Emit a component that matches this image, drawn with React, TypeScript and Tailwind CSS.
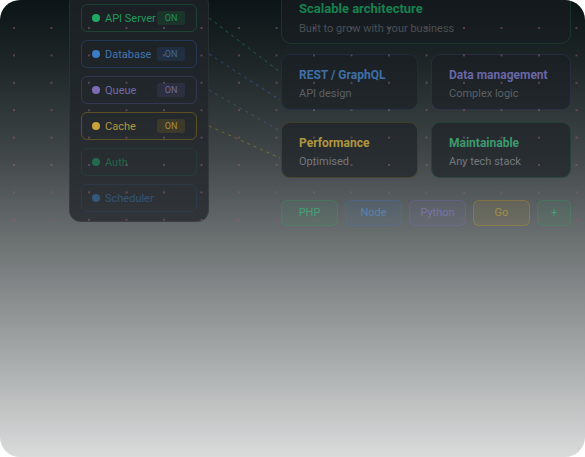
import type { ReactNode } from "react";

type Tone = "green" | "blue" | "purple" | "yellow";

const services: { name: string; tone: Tone; on: boolean }[] = [
  { name: "API Server", tone: "green", on: true },
  { name: "Database", tone: "blue", on: true },
  { name: "Queue", tone: "purple", on: true },
  { name: "Cache", tone: "yellow", on: true },
  { name: "Auth", tone: "green", on: false },
  { name: "Scheduler", tone: "blue", on: false },
];

const rowStyles: Record<Tone, { row: string; dot: string; text: string; pill: string }> = {
  green: {
    row: "border-[#22c55e]/20",
    dot: "bg-[#1fa866]",
    text: "text-[#1f9a5e]",
    pill: "bg-[#22c55e]/12 text-[#23915a]",
  },
  blue: {
    row: "border-[#3b82f6]/22",
    dot: "bg-[#3c7cc2]",
    text: "text-[#3f74ae]",
    pill: "bg-[#3b82f6]/12 text-[#42699a]",
  },
  purple: {
    row: "border-[#8b7cf6]/18",
    dot: "bg-[#7c6cb8]",
    text: "text-[#716aa8]",
    pill: "bg-[#8b7cf6]/10 text-[#6e6a9c]",
  },
  yellow: {
    row: "border-[#eab308]/28",
    dot: "bg-[#c9a23c]",
    text: "text-[#b4953c]",
    pill: "bg-[#eab308]/12 text-[#a88f3c]",
  },
};

const pills: { label: string; cls: string; w: string }[] = [
  { label: "PHP", cls: "border-[#22c55e]/18 bg-[#22c55e]/6 text-[#45a078]", w: "w-[57px]" },
  { label: "Node", cls: "border-[#3b82f6]/18 bg-[#3b82f6]/6 text-[#5882b2]", w: "w-[57px]" },
  { label: "Python", cls: "border-[#8b7cf6]/18 bg-[#8b7cf6]/6 text-[#7874aa]", w: "w-[57px]" },
  { label: "Go", cls: "border-[#eab308]/22 bg-[#eab308]/7 text-[#a58e4a]", w: "w-[57px]" },
  { label: "+", cls: "border-[#22c55e]/18 bg-[#22c55e]/6 text-[#45a078]", w: "w-[34px]" },
];

function ServiceRow({ name, tone, on }: { name: string; tone: Tone; on: boolean }) {
  const s = rowStyles[tone];
  return (
    <div
      className={`flex h-[28px] items-center rounded-[6px] border pl-[10px] pr-[11px] ${s.row} ${
        on ? "" : "opacity-50"
      }`}
    >
      <span className={`h-[8px] w-[8px] shrink-0 rounded-full ${s.dot}`} />
      <span className={`ml-[5px] whitespace-nowrap text-[11px] leading-none ${s.text}`}>{name}</span>
      {on ? (
        <span
          className={`ml-auto flex h-[14px] w-[28px] shrink-0 items-center justify-center rounded-[3px] text-[9px] leading-none ${s.pill}`}
        >
          ON
        </span>
      ) : null}
    </div>
  );
}

function FeatureCard({
  title,
  subtitle,
  titleColor,
  border,
  subColor,
}: {
  title: string;
  subtitle: string;
  titleColor: string;
  border: string;
  subColor: string;
}) {
  return (
    <div className={`flex h-[56px] flex-col rounded-[9px] border bg-[rgba(26,30,35,0.63)] pl-[17px] pt-[12px] ${border}`}>
      <span className={`text-[12px] font-bold leading-[16px] ${titleColor}`}>{title}</span>
      <span className={`mt-[3px] text-[11px] leading-[16px] ${subColor}`}>{subtitle}</span>
    </div>
  );
}

function DotGrid() {
  const dots: ReactNode[] = [];
  for (let r = 0; r < 8; r++) {
    for (let c = 0; c < 16; c++) {
      dots.push(<rect key={`${r}-${c}`} x={13 + c * 37.5} y={27 + r * 27.4} width={2} height={2} />);
    }
  }
  return (
    <svg className="pointer-events-none absolute inset-0" width={585} height={457} fill="rgba(145,92,125,0.52)">
      {dots}
    </svg>
  );
}

function Connectors() {
  return (
    <svg className="pointer-events-none absolute inset-0" width={585} height={457} fill="none" strokeWidth={1} strokeDasharray="3 4">
      <line x1={209} y1={18} x2={280} y2={72} stroke="rgba(34,197,94,0.4)" />
      <line x1={209} y1={54} x2={280} y2={100} stroke="rgba(59,130,246,0.4)" />
      <line x1={209} y1={90} x2={280} y2={131} stroke="rgba(99,120,220,0.35)" />
      <line x1={209} y1={126} x2={280} y2={158} stroke="rgba(234,179,8,0.35)" />
    </svg>
  );
}

export default function App() {
  return (
    <div className="min-h-screen bg-white">
      <div className="relative h-[457px] w-[585px] overflow-hidden rounded-[20px] bg-[linear-gradient(180deg,#0b1416_0%,#1e2628_14%,#43494b_35%,#8a8e8f_66%,#dadbdb_100%)] font-[Roboto,sans-serif]">
        <div className="flex items-start gap-[72px] pl-[69px]">
          <aside className="-mt-[8px] flex w-[140px] flex-col gap-[8px] rounded-[12px] border border-white/5 bg-[rgba(32,36,42,0.75)] px-[11px] pb-[9px] pt-[11px]">
            {services.map((s) => (
              <ServiceRow key={s.name} {...s} />
            ))}
          </aside>

          <main className="-mt-[14px] flex w-[290px] flex-col">
            <div className="flex h-[58px] flex-col rounded-[10px] border border-[#22c55e]/15 bg-[rgba(26,30,35,0.55)] pl-[17px] pt-[14px]">
              <span className="text-[13px] font-bold leading-[16px] text-[#17814f]">Scalable architecture</span>
              <span className="mt-[4px] text-[11px] leading-[16px] text-[#4a5055]">Built to grow with your business</span>
            </div>

            <div className="mt-[10px] grid grid-cols-[137px_140px] gap-x-[13px] gap-y-[12px]">
              <FeatureCard
                title="REST / GraphQL"
                subtitle="API design"
                titleColor="text-[#3f70a8]"
                border="border-[#3b82f6]/12"
                subColor="text-[#5b6166]"
              />
              <FeatureCard
                title="Data management"
                subtitle="Complex logic"
                titleColor="text-[#6a66a8]"
                border="border-[#8b7cf6]/12"
                subColor="text-[#5b6166]"
              />
              <FeatureCard
                title="Performance"
                subtitle="Optimised"
                titleColor="text-[#b0973e]"
                border="border-[#eab308]/15"
                subColor="text-[#74797d]"
              />
              <FeatureCard
                title="Maintainable"
                subtitle="Any tech stack"
                titleColor="text-[#3d9a6e]"
                border="border-[#22c55e]/15"
                subColor="text-[#74797d]"
              />
            </div>

            <div className="mt-[22px] flex gap-[7px]">
              {pills.map((p) => (
                <span
                  key={p.label}
                  className={`flex h-[26px] items-center justify-center rounded-[6px] border text-[11px] ${p.w} ${p.cls}`}
                >
                  {p.label}
                </span>
              ))}
            </div>
          </main>
        </div>

        <Connectors />
        <DotGrid />
      </div>
    </div>
  );
}
